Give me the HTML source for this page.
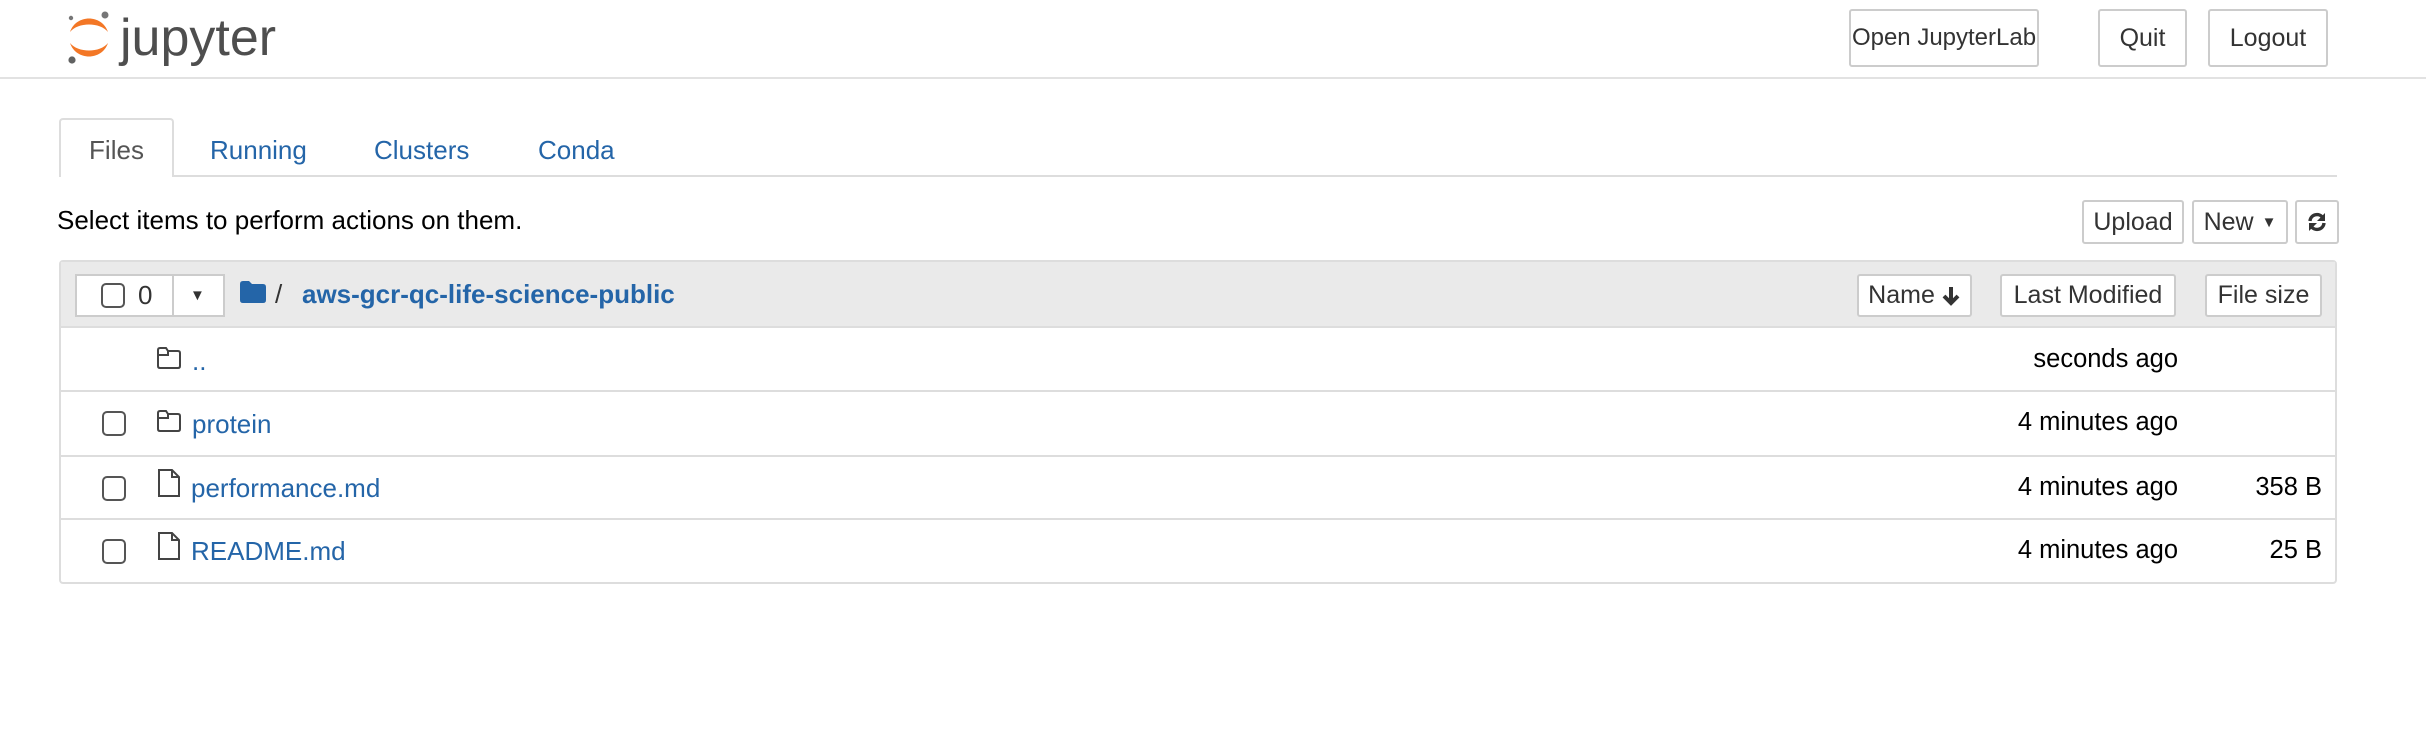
<!DOCTYPE html>
<html><head><meta charset="utf-8"><style>
*{box-sizing:border-box;margin:0;padding:0}
body{width:2426px;height:740px;background:#fff;font-family:"Liberation Sans",Arial,sans-serif;color:#000;position:relative;overflow:hidden;font-size:26px}
.a{position:absolute;white-space:nowrap}
.btn{position:absolute;border:2px solid #ccc;border-radius:3px;background:#fff;display:flex;align-items:center;justify-content:center;font-size:26px;color:#333;white-space:nowrap}
.link{color:#2465a8}
.row{position:absolute;left:59px;width:2278px;border-top:2px solid #ddd}
.cb{position:absolute;width:24px;height:25px;border:2px solid #555;border-radius:5px;background:#fff}
.t{position:absolute;right:159px;text-align:right;white-space:nowrap;font-size:25.5px}
.s{position:absolute;right:15px;text-align:right;white-space:nowrap;font-size:25.5px}
</style></head><body>
<!-- logo -->
<svg class="a" style="left:66px;top:10px" width="46" height="54" viewBox="0 0 46 54">
<path d="M4 22 C10 4 36 4 42 22 C34 12 12 12 4 22Z" fill="#f37726"/>
<path d="M4 33 C10 51 36 51 42 33 C34 43 12 43 4 33Z" fill="#f37726"/>
<circle cx="39" cy="5" r="3.5" fill="#767677"/>
<circle cx="5" cy="8" r="2.2" fill="#767677"/>
<circle cx="6" cy="50" r="3.6" fill="#616262"/>
</svg>
<div class="a" style="left:120px;top:8px;font-size:52px;color:#4e4e4e">jupyter</div>
<div class="btn" style="left:1849px;top:9px;width:190px;height:58px;font-size:24px">Open JupyterLab</div>
<div class="btn" style="left:2098px;top:9px;width:89px;height:58px;font-size:25px">Quit</div>
<div class="btn" style="left:2208px;top:9px;width:120px;height:58px;font-size:25px">Logout</div>
<div class="a" style="left:0;top:77px;width:2426px;height:2px;background:#e2e2e2"></div>
<!-- tabs -->
<div class="a" style="left:59px;top:175px;width:2278px;height:2px;background:#ddd"></div>
<div class="a" style="left:59px;top:118px;width:115px;height:59px;border:2px solid #ddd;border-bottom:none;border-radius:4px 4px 0 0;background:#fff;text-align:center;line-height:60px;color:#555">Files</div>
<div class="a link" style="left:210px;top:135px">Running</div>
<div class="a link" style="left:374px;top:135px">Clusters</div>
<div class="a link" style="left:538px;top:135px">Conda</div>
<div class="a" style="left:57px;top:205px">Select items to perform actions on them.</div>
<div class="btn" style="left:2082px;top:200px;width:102px;height:44px;font-size:25px">Upload</div>
<div class="btn" style="left:2192px;top:200px;width:96px;height:44px;font-size:25px">New <span style="font-size:15px;margin-left:8px">▼</span></div>
<div class="btn" style="left:2295px;top:200px;width:44px;height:44px">
<svg width="22" height="22" viewBox="0 0 22 22"><path d="M4 10 A7 7 0 0 1 17 7" fill="none" stroke="#333" stroke-width="3.4"/><path d="M19 2 L19 10 L11 10Z" fill="#333"/><path d="M18 12 A7 7 0 0 1 5 15" fill="none" stroke="#333" stroke-width="3.4"/><path d="M3 20 L3 12 L11 12Z" fill="#333"/></svg></div>
<!-- table -->
<div class="a" style="left:59px;top:260px;width:2278px;height:324px;border:2px solid #ddd;border-radius:4px"></div>
<div class="a" style="left:61px;top:262px;width:2274px;height:64px;background:#eaeaea"></div>
<div class="a" style="left:75px;top:274px;width:150px;height:43px;border:2px solid #ccc;background:#fff"></div>
<div class="a" style="left:172px;top:276px;width:2px;height:39px;background:#ccc"></div>
<div class="cb" style="left:101px;top:283px"></div>
<div class="a" style="left:138px;top:280px;color:#333">0</div>
<div class="a" style="left:190px;top:287px;font-size:15px;color:#333">▼</div>
<svg class="a" style="left:240px;top:281px" width="26" height="22" viewBox="0 0 26 22"><path d="M0 3 Q0 0 3 0 L9 0 L12 3 L23 3 Q26 3 26 6 L26 19 Q26 22 23 22 L3 22 Q0 22 0 19Z" fill="#2465a8"/></svg>
<div class="a" style="left:275px;top:279px;color:#333">/</div>
<div class="a link" style="left:302px;top:279px;font-weight:bold">aws-gcr-qc-life-science-public</div>
<div class="btn" style="left:1857px;top:274px;width:115px;height:43px;font-size:25px">Name<svg style="margin-left:6px" width="20" height="22" viewBox="0 0 20 22"><path d="M10 2 L10 17 M3 11 L10 18 L17 11" fill="none" stroke="#333" stroke-width="4"/></svg></div>
<div class="btn" style="left:2000px;top:274px;width:176px;height:43px;font-size:25px">Last Modified</div>
<div class="btn" style="left:2205px;top:274px;width:117px;height:43px;font-size:25px">File size</div>

<div class="row" style="top:326px;height:64px;border-top:2px solid #ddd">
<svg class="a" style="left:97px;top:18px" width="26" height="24" viewBox="0 0 26 24"><path d="M2 4 Q2 2 4 2 L10 2 L12 5 L22 5 Q24 5 24 7 L24 20 Q24 22 22 22 L4 22 Q2 22 2 20Z" fill="none" stroke="#444" stroke-width="2"/><path d="M2 9 L12 9 L12 5" fill="none" stroke="#444" stroke-width="2"/></svg>
<div class="a link" style="left:133px;top:18px">..</div>
<div class="t" style="top:17px">seconds ago</div></div>

<div class="row" style="top:390px;height:65px">
<div class="cb" style="left:43px;top:19px"></div>
<svg class="a" style="left:97px;top:17px" width="26" height="24" viewBox="0 0 26 24"><path d="M2 4 Q2 2 4 2 L10 2 L12 5 L22 5 Q24 5 24 7 L24 20 Q24 22 22 22 L4 22 Q2 22 2 20Z" fill="none" stroke="#444" stroke-width="2"/><path d="M2 9 L12 9 L12 5" fill="none" stroke="#444" stroke-width="2"/></svg>
<div class="a link" style="left:133px;top:17px">protein</div>
<div class="t" style="top:16px">4 minutes ago</div></div>

<div class="row" style="top:455px;height:63px">
<div class="cb" style="left:43px;top:19px"></div>
<svg class="a" style="left:98px;top:11px" width="24" height="30" viewBox="0 0 24 30"><path d="M2 2 L15 2 L22 9 L22 28 L2 28Z M15 2 L15 9 L22 9" fill="none" stroke="#444" stroke-width="2"/></svg>
<div class="a link" style="left:132px;top:16px">performance.md</div>
<div class="t" style="top:16px">4 minutes ago</div><div class="s" style="top:16px">358 B</div></div>

<div class="row" style="top:518px;height:64px">
<div class="cb" style="left:43px;top:19px"></div>
<svg class="a" style="left:98px;top:11px" width="24" height="30" viewBox="0 0 24 30"><path d="M2 2 L15 2 L22 9 L22 28 L2 28Z M15 2 L15 9 L22 9" fill="none" stroke="#444" stroke-width="2"/></svg>
<div class="a link" style="left:132px;top:16px">README.md</div>
<div class="t" style="top:16px">4 minutes ago</div><div class="s" style="top:16px">25 B</div></div>
</body></html>
